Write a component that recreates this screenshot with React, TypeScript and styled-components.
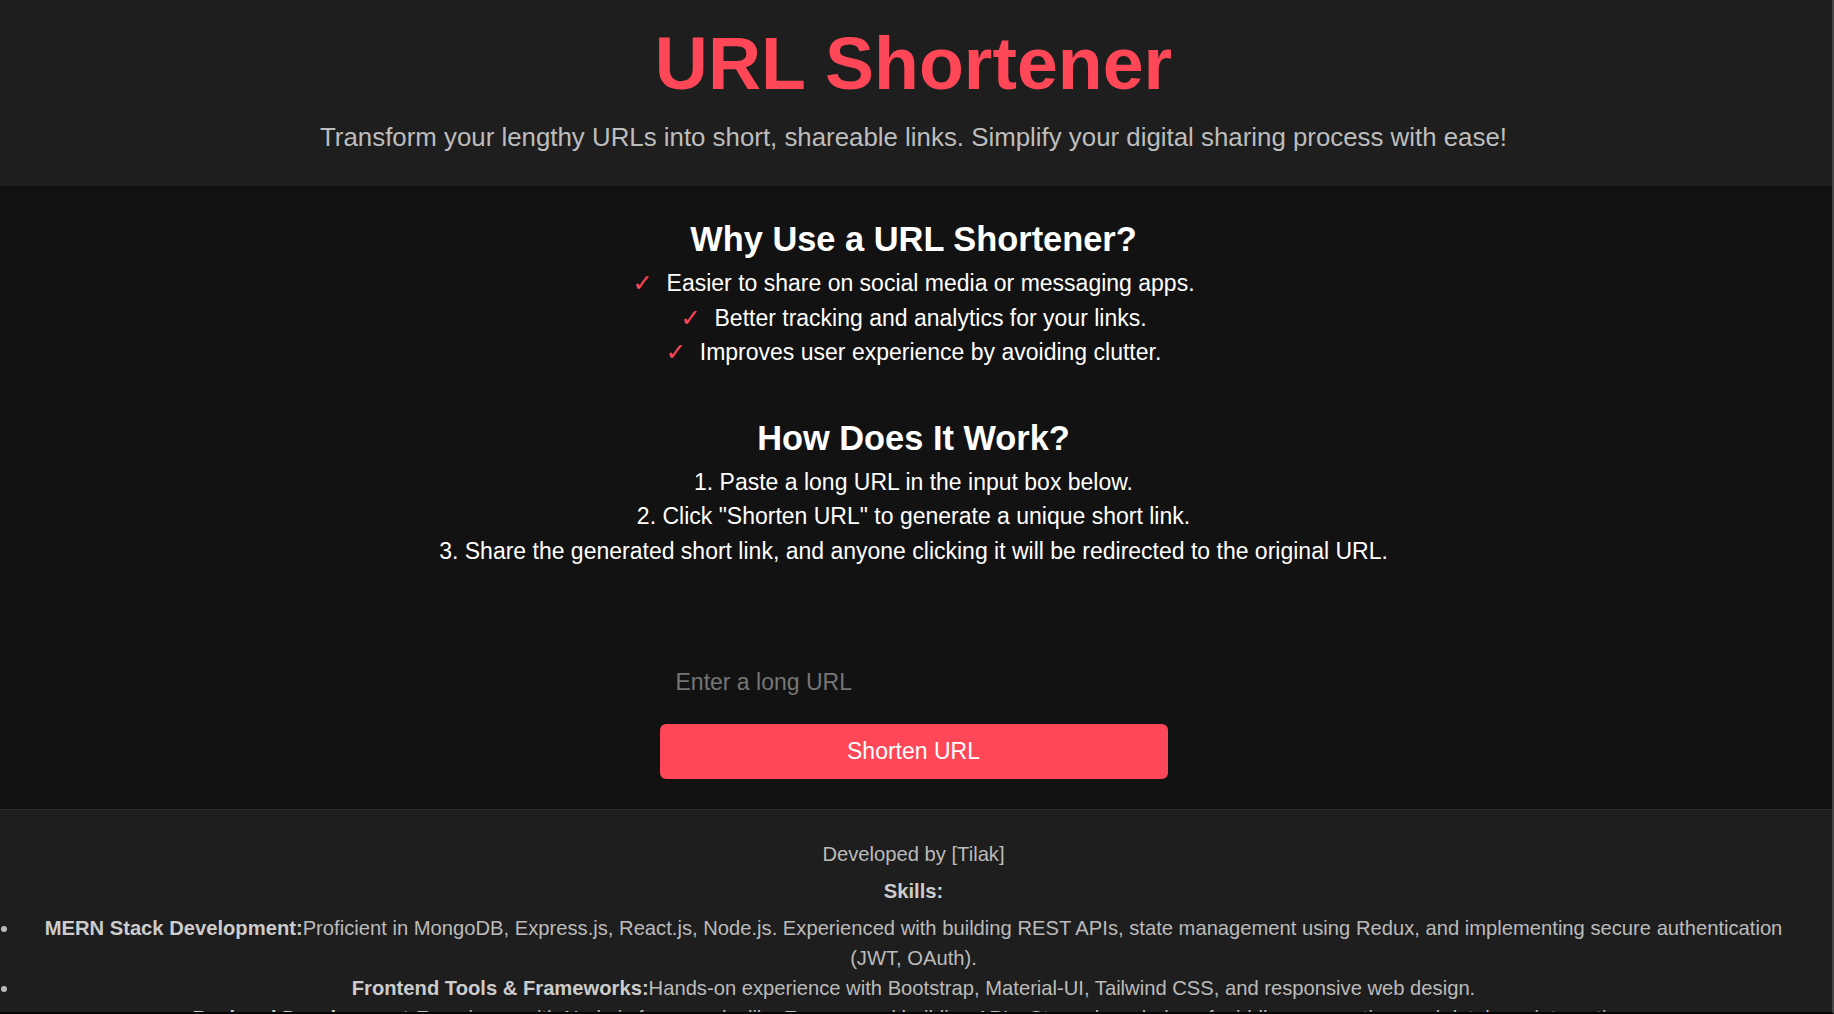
import React from "react";
import styled, { createGlobalStyle } from "styled-components";

const GlobalStyle = createGlobalStyle`
  html, body {
    margin: 0;
    padding: 0;
    background: #121212;
    overflow: hidden;
  }
  body {
    font-family: "Liberation Sans", Arial, Helvetica, sans-serif;
  }
  * { box-sizing: border-box; }
`;

const Page = styled.div`
  display: flex;
  flex-direction: column;
  min-height: 100vh;
`;

const EdgeFrame = styled.div`
  position: fixed;
  inset: 0;
  pointer-events: none;
  border-right: 2px solid #474747;
  border-bottom: 2px solid #050505;
`;

const Header = styled.header`
  background: #1e1e1e;
  padding: 22px 27px 34px 20px;
  text-align: center;
`;

const Title = styled.h1`
  margin: 0;
  font-size: 73.5px;
  line-height: 84px;
  font-weight: 700;
  color: #ff4757;
`;

const Tagline = styled.p`
  margin: 16px 0 0;
  font-size: 25.85px;
  line-height: 30px;
  color: #bdbdbd;
`;

const Main = styled.main`
  background: #121212;
  padding: 33px 27px 30px 20px;
  display: flex;
  flex-direction: column;
  align-items: center;
  text-align: center;
`;

const InfoBlock = styled.section<{ $gap?: number }>`
  margin-top: ${(p) => p.$gap ?? 0}px;
`;

const Heading = styled.h2`
  margin: 0 0 7px;
  font-size: 34.4px;
  line-height: 40px;
  font-weight: 700;
  color: #ffffff;
`;

const InfoList = styled.ul`
  list-style: none;
  margin: 0;
  padding: 0;
`;

const InfoItem = styled.li`
  font-size: 23px;
  line-height: 34.5px;
  height: 34.5px;
  color: #ffffff;
`;

const Check = styled.span`
  color: #ff4757;
  margin-right: 14px;
  font-family: "DejaVu Sans", sans-serif;
  font-weight: 700;
  font-size: 24px;
  line-height: 1;
`;

const Form = styled.form`
  margin-top: 89px;
  width: 508px;
  display: flex;
  flex-direction: column;
  gap: 17px;
`;

const UrlInput = styled.input`
  height: 50px;
  width: 100%;
  background: transparent;
  border: none;
  outline: none;
  padding: 0 16px;
  font-family: inherit;
  font-size: 23px;
  color: #ffffff;
  &::placeholder {
    color: #767676;
  }
`;

const SubmitButton = styled.button`
  height: 55px;
  width: 100%;
  border: none;
  border-radius: 6px;
  background: #ff4757;
  color: #ffffff;
  font-family: inherit;
  font-size: 23px;
  cursor: pointer;
`;

const Footer = styled.footer`
  background: #1e1e1e;
  border-top: 1px solid #2e2e2e;
  padding: 29px 27px 20px 20px;
  text-align: center;
  color: #bbbbbb;
  font-size: 20.2px;
  line-height: 30px;
  flex: 1;
`;

const Credit = styled.p`
  margin: 0;
`;

const SkillsTitle = styled.p`
  margin: 7px 0 0;
  font-weight: 700;
  color: #cccccc;
`;

const SkillList = styled.ul`
  margin: 6.5px 0 0;
  padding: 0;
  list-style: disc outside;
`;

const SkillItem = styled.li`
  text-align: center;
`;

const SkillName = styled.strong`
  color: #cccccc;
`;

const benefits = [
  "Easier to share on social media or messaging apps.",
  "Better tracking and analytics for your links.",
  "Improves user experience by avoiding clutter.",
];

const steps = [
  "1. Paste a long URL in the input box below.",
  '2. Click "Shorten URL" to generate a unique short link.',
  "3. Share the generated short link, and anyone clicking it will be redirected to the original URL.",
];

const skills = [
  {
    name: "MERN Stack Development:",
    text: "Proficient in MongoDB, Express.js, React.js, Node.js. Experienced with building REST APIs, state management using Redux, and implementing secure authentication (JWT, OAuth).",
  },
  {
    name: "Frontend Tools & Frameworks:",
    text: "Hands-on experience with Bootstrap, Material-UI, Tailwind CSS, and responsive web design.",
  },
  {
    name: "Backend Development:",
    text: "Experience with Node.js frameworks like Express and building APIs. Strong knowledge of middleware, routing, and database integration.",
  },
  {
    name: "Databases:",
    text: "Skilled in MongoDB and Mongoose, with experience in schema design and data modeling.",
  },
];

export default function App() {
  return (
    <>
      <GlobalStyle />
      <Page>
        <Header>
          <Title>URL Shortener</Title>
          <Tagline>
            Transform your lengthy URLs into short, shareable links. Simplify your digital sharing process with ease!
          </Tagline>
        </Header>

        <Main>
          <InfoBlock>
            <Heading>Why Use a URL Shortener?</Heading>
            <InfoList>
              {benefits.map((b) => (
                <InfoItem key={b}>
                  <Check>✓</Check>
                  {b}
                </InfoItem>
              ))}
            </InfoList>
          </InfoBlock>

          <InfoBlock $gap={48}>
            <Heading>How Does It Work?</Heading>
            <InfoList>
              {steps.map((s) => (
                <InfoItem key={s}>{s}</InfoItem>
              ))}
            </InfoList>
          </InfoBlock>

          <Form onSubmit={(e) => e.preventDefault()}>
            <UrlInput type="text" placeholder="Enter a long URL" />
            <SubmitButton type="submit">Shorten URL</SubmitButton>
          </Form>
        </Main>

        <Footer>
          <Credit>Developed by [Tilak]</Credit>
          <SkillsTitle>Skills:</SkillsTitle>
          <SkillList>
            {skills.map((s) => (
              <SkillItem key={s.name}>
                <SkillName>{s.name}</SkillName>
                {s.text}
              </SkillItem>
            ))}
          </SkillList>
        </Footer>
      </Page>
      <EdgeFrame />
    </>
  );
}
